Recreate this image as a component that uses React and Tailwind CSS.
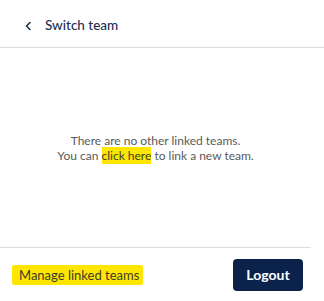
import React from 'react';

const App = () => {
  return (
    <div className="w-[324px] h-[301px] bg-white flex flex-col font-['Lato',sans-serif]">
      {/* Header */}
      <div className="h-[48px] flex items-center pl-[24px] pt-[5px] border-b border-[#dcdcdc]">
        <svg className="w-[8px] h-[10px] mr-[13px]" viewBox="0 0 8 10" fill="none">
          <path d="M6 1.5L2.5 5L6 8.5" stroke="#1f2f52" strokeWidth="1.6" strokeLinecap="round" strokeLinejoin="round" />
        </svg>
        <span className="text-[13.5px] font-medium text-[#1f2f52] leading-none">Switch team</span>
      </div>

      {/* Body */}
      <div className="flex-1 flex items-center justify-center pr-[13px]">
        <p className="text-[12px] leading-[15px] text-[#5a5a5a] text-center">
          There are no other linked teams.
          <br />
          You can <span className="bg-[#ffe600] text-[#3c3c2a] py-[1px]">click here</span> to link a new team.
        </p>
      </div>

      {/* Footer */}
      <div className="w-[311px] border-t border-[#dcdcdc] h-[54px] flex items-center justify-between pl-[12px] pr-[8px]">
        <span className="bg-[#ffe600] text-[#3c3c2a] text-[13px] leading-[20px] pl-[7px] pr-[4px] rounded-[2px]">
          Manage linked teams
        </span>
        <button
          type="button"
          className="w-[70px] h-[32px] rounded-[4px] bg-[#0b234a] text-white text-[14px] font-bold"
        >
          Logout
        </button>
      </div>
    </div>
  );
};

export default App;
